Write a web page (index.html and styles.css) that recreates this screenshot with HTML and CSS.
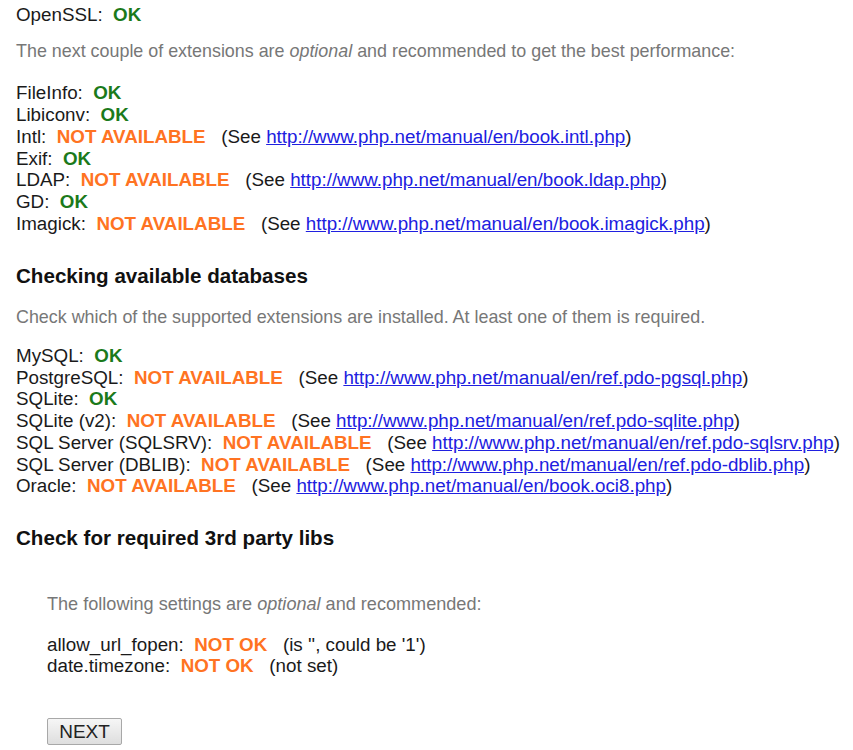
FILE: index.html
```html
<!DOCTYPE html>
<html>
<head>
<meta charset="utf-8">
<link rel="stylesheet" href="styles.css">
</head>
<body>
<div class="page">
  <div class="row first">OpenSSL:&nbsp; <span class="ok">OK</span></div>

  <p class="note note-ext">The next couple of extensions are <em>optional</em> and recommended to get the best performance:</p>

  <div class="list">
    <div class="row">FileInfo:&nbsp; <span class="ok">OK</span></div>
    <div class="row">Libiconv:&nbsp; <span class="ok">OK</span></div>
    <div class="row">Intl:&nbsp; <span class="na">NOT AVAILABLE</span> &nbsp; (See <a href="#">http://www.php.net/manual/en/book.intl.php</a>)</div>
    <div class="row">Exif:&nbsp; <span class="ok">OK</span></div>
    <div class="row">LDAP:&nbsp; <span class="na">NOT AVAILABLE</span> &nbsp; (See <a href="#">http://www.php.net/manual/en/book.ldap.php</a>)</div>
    <div class="row">GD:&nbsp; <span class="ok">OK</span></div>
    <div class="row">Imagick:&nbsp; <span class="na">NOT AVAILABLE</span> &nbsp; (See <a href="#">http://www.php.net/manual/en/book.imagick.php</a>)</div>
  </div>

  <h3 class="heading h-db">Checking available databases</h3>

  <p class="note note-db">Check which of the supported extensions are installed. At least one of them is required.</p>

  <div class="list">
    <div class="row">MySQL:&nbsp; <span class="ok">OK</span></div>
    <div class="row">PostgreSQL:&nbsp; <span class="na">NOT AVAILABLE</span> &nbsp; (See <a href="#">http://www.php.net/manual/en/ref.pdo-pgsql.php</a>)</div>
    <div class="row">SQLite:&nbsp; <span class="ok">OK</span></div>
    <div class="row">SQLite (v2):&nbsp; <span class="na">NOT AVAILABLE</span> &nbsp; (See <a href="#">http://www.php.net/manual/en/ref.pdo-sqlite.php</a>)</div>
    <div class="row">SQL Server (SQLSRV):&nbsp; <span class="na">NOT AVAILABLE</span> &nbsp; (See <a href="#">http://www.php.net/manual/en/ref.pdo-sqlsrv.php</a>)</div>
    <div class="row">SQL Server (DBLIB):&nbsp; <span class="na">NOT AVAILABLE</span> &nbsp; (See <a href="#">http://www.php.net/manual/en/ref.pdo-dblib.php</a>)</div>
    <div class="row">Oracle:&nbsp; <span class="na">NOT AVAILABLE</span> &nbsp; (See <a href="#">http://www.php.net/manual/en/book.oci8.php</a>)</div>
  </div>

  <h3 class="heading h-libs">Check for required 3rd party libs</h3>

  <div class="indent">
    <p class="note note-opt">The following settings are <em>optional</em> and recommended:</p>
    <div class="list">
      <div class="row">allow_url_fopen:&nbsp; <span class="na">NOT OK</span> &nbsp; (is '', could be '1')</div>
      <div class="row">date.timezone:&nbsp; <span class="na">NOT OK</span> &nbsp; (not set)</div>
    </div>
    <button class="next" type="button">NEXT</button>
  </div>
</div>
</body>
</html>
```

FILE: styles.css
```css
html, body {
  margin: 0;
  padding: 0;
  background: #ffffff;
}

.page {
  padding: 4px 0 0 16px;
  font-family: "Liberation Sans", Arial, sans-serif;
  font-size: 18.8px;
  line-height: 21.7px;
  color: #1a1a1a;
}

.row {
  white-space: nowrap;
}

.ok {
  color: #1b7a1b;
  font-weight: bold;
}

.na {
  color: #ff7322;
  font-weight: bold;
}

a {
  color: #2020e0;
  text-decoration: underline;
}

.note {
  margin: 0;
  color: #777777;
  font-size: 17.9px;
  white-space: nowrap;
}

.note em {
  font-style: italic;
}

.note-ext {
  margin-top: 15px;
  margin-bottom: 20px;
}

.heading {
  margin: 0;
  font-size: 20.6px;
  line-height: 24px;
  font-weight: bold;
  color: #111111;
}

.h-db {
  margin-top: 30px;
  margin-bottom: 19px;
}

.note-db {
  margin-bottom: 16px;
}

.h-libs {
  margin-top: 29px;
}

.indent {
  padding-left: 31px;
  margin-top: 44px;
}

.note-opt {
  font-size: 18.1px;
  margin-bottom: 18px;
}

.next {
  margin-top: 41px;
  width: 75px;
  height: 27px;
  padding: 0;
  font-family: "Liberation Sans", Arial, sans-serif;
  font-size: 19px;
  color: #222222;
  background: linear-gradient(#f6f6f6, #dedede);
  border: 1px solid #a8a8a8;
  border-radius: 2px;
}
```
